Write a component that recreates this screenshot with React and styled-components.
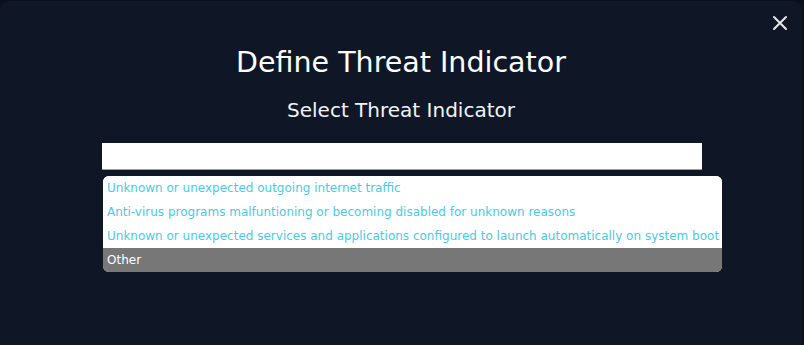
import React from 'react';
import styled, { createGlobalStyle } from 'styled-components';

const GlobalStyle = createGlobalStyle`
    html, body {
        margin: 0;
        padding: 0;
        background-color: #0b111c;
    }
    body {
        font-family: "DejaVu Sans", sans-serif;
    }
`;

const options = [
    'Unknown or unexpected outgoing internet traffic',
    'Anti-virus programs malfuntioning or becoming disabled for unknown reasons',
    'Unknown or unexpected services and applications configured to launch automatically on system boot',
    'Other',
];

const App = () => {
    return (
        <>
            <GlobalStyle />
            <Modal>
                <CloseButton aria-label="Close">
                    <svg width="16" height="16" viewBox="0 0 16 16">
                        <path d="M2 2 L14 14 M14 2 L2 14" stroke="#e6e8ec" strokeWidth="2" strokeLinecap="round" />
                    </svg>
                </CloseButton>
                <Title>Define Threat Indicator</Title>
                <Subtitle>Select Threat Indicator</Subtitle>
                <Field>
                    <SearchInput type="text" />
                    <OptionList>
                        {options.map((opt, i) => (
                            <OptionItem key={opt} $active={i === options.length - 1}>
                                {opt}
                            </OptionItem>
                        ))}
                    </OptionList>
                </Field>
            </Modal>
        </>
    );
};

// Styles

const Modal = styled.div`
    position: relative;
    box-sizing: border-box;
    width: 802px;
    height: 345px;
    margin-top: 1px;
    background-color: #0f1727;
    border-radius: 9px 9px 0 0;
    display: flex;
    flex-direction: column;
    align-items: center;
    padding-top: 44px;
`;

const CloseButton = styled.button`
    position: absolute;
    top: 13px;
    right: 13px;
    width: 18px;
    height: 18px;
    padding: 0;
    border: none;
    background: none;
    display: flex;
    align-items: center;
    justify-content: center;
    cursor: pointer;
`;

const Title = styled.h1`
    margin: 0;
    color: #ffffff;
    font-size: 28.5px;
    font-weight: 500;
    line-height: 36px;
`;

const Subtitle = styled.h2`
    margin: 15px 0 0 0;
    color: #f2f3f5;
    font-size: 20px;
    font-weight: 400;
    line-height: 28px;
`;

const Field = styled.div`
    align-self: flex-start;
    margin: 19px 0 0 102px;
    display: flex;
    flex-direction: column;
`;

const SearchInput = styled.input`
    box-sizing: border-box;
    width: 600px;
    height: 27px;
    margin: 0;
    border: none;
    border-bottom: 1px solid #9aa0a8;
    background-color: #ffffff;
    outline: none;
`;

const OptionList = styled.ul`
    list-style: none;
    margin: 6px 0 0 1px;
    padding: 0;
    width: 619px;
    background-color: #ffffff;
    border-radius: 6px;
    overflow: hidden;
`;

const OptionItem = styled.li`
    padding: 0 4px;
    height: 24px;
    line-height: 24px;
    font-size: 12px;
    white-space: nowrap;
    color: ${(p) => (p.$active ? '#ffffff' : '#4cc9e1')};
    background-color: ${(p) => (p.$active ? '#777777' : '#ffffff')};
`;

export default App;
